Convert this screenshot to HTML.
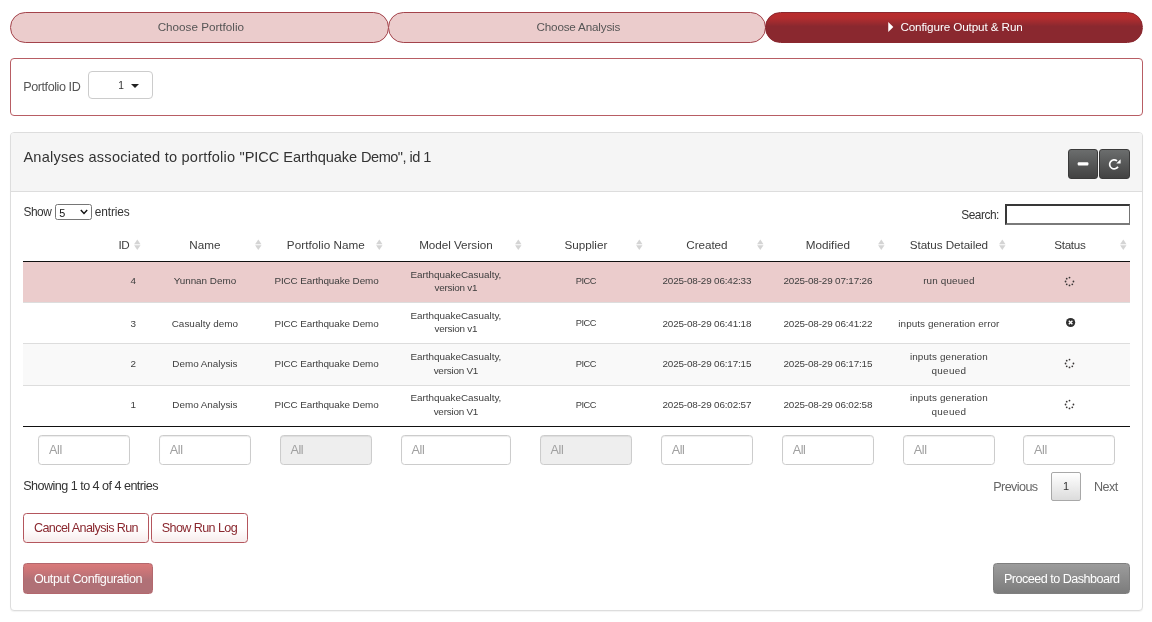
<!DOCTYPE html>
<html lang="en">
<head>
<meta charset="utf-8">
<title>Configure Output &amp; Run</title>
<style>
*{box-sizing:border-box;}
html,body{margin:0;padding:0;}
body{will-change:transform;width:1152px;height:622px;overflow:hidden;background:#fff;position:relative;
  font-family:"Liberation Sans",sans-serif;font-size:12.6px;color:#333;line-height:18px;}
.abs{position:absolute;white-space:nowrap;}
/* ---------- step pills ---------- */
.pill{position:absolute;top:12px;height:30.6px;border:1px solid #a3434b;background:#ebcccc;
  border-radius:15.3px;text-align:center;padding-left:3.2px;line-height:27.7px;color:#555;font-size:11.7px;letter-spacing:0;}
.p1{left:10px;width:378.5px;}
.p2{left:387.5px;width:378.5px;}
.p3{left:765px;width:377.5px;border-color:#8a282f;color:#fff;
  background:linear-gradient(to bottom,#ba2c2c 0%,#b22d2f 18%,#8a282f 46%,#8a282f 100%);letter-spacing:-.11px;}
.p3 svg{vertical-align:-1.1px;margin-right:6.8px;}
/* ---------- portfolio box ---------- */
.pbox{position:absolute;left:10px;top:58px;width:1132.5px;height:57.6px;border:1px solid #b85d64;border-radius:4px;background:#fff;}
.pbox .lab{position:absolute;left:12.2px;top:18.6px;color:#555;letter-spacing:-.43px;}
.psel{position:absolute;left:77px;top:12px;width:65px;height:28px;border:1px solid #ccc;border-radius:4px;background:#fff;}
.psel span{position:absolute;left:29.2px;top:5.1px;font-size:10.2px;color:#333;}
.psel i{position:absolute;left:41.5px;top:12px;width:0;height:0;border-left:4.2px solid transparent;border-right:4.2px solid transparent;border-top:4.6px solid #222;}
/* ---------- panel ---------- */
.panel{position:absolute;left:10px;top:132px;width:1132.5px;height:479px;border:1px solid #ddd;border-radius:4px;background:#fff;box-shadow:0 1px 1px rgba(0,0,0,.05);}
.in{position:absolute;left:-1px;top:-1px;width:1132.5px;height:479px;}
.ph{position:absolute;left:1px;top:1px;width:1130.5px;height:58.6px;background:#f5f5f5;border-bottom:1px solid #ddd;border-radius:3px 3px 0 0;}
.ph .title{position:absolute;left:12.4px;top:11.8px;font-size:14.6px;line-height:24px;color:#333;letter-spacing:0;white-space:pre;}
.hb{position:absolute;top:15.6px;width:30.8px;height:30.6px;border:1px solid #3a3a3a;border-radius:3px;
  background:linear-gradient(to bottom,#6b6d6d 0%,#424242 100%);}
.hb1{left:1056.8px;width:30.5px;}
.hb2{left:1087.5px;width:31.5px;}
.hb svg{position:absolute;left:0;top:0;}

/* ---------- datatable ---------- */
.dt-len{position:absolute;left:13.4px;top:71.1px;height:18px;line-height:18px;color:#333;font-size:11.9px;}
.dt-len .t{letter-spacing:-.41px;}
.lsel{position:absolute;left:44.8px;top:72.4px;width:37px;height:15.6px;border:1px solid #767676;border-radius:2.5px;background:#fff;}
.lsel span{position:absolute;left:3.4px;top:-.4px;font-size:10.8px;line-height:16px;color:#111;}
.lsel svg{position:absolute;right:3.2px;top:3.6px;}
.dt-search{position:absolute;left:951.2px;top:74.4px;line-height:18px;font-size:11.9px;letter-spacing:-.46px;}
.sinp{position:absolute;left:995px;top:72px;width:125.4px;height:21px;border:2px solid #383838;border-right:1.6px solid #747474;border-bottom-color:#7a7a7a;background:#fff;}
table.dt{position:absolute;left:13.4px;top:101.4px;width:1107px;border-collapse:separate;border-spacing:0;table-layout:fixed;}
table.dt th{height:28.8px;padding:0;font-weight:normal;font-size:11.7px;color:#3d3d3d;text-align:center;position:relative;border-bottom:1px solid #111;line-height:16px;padding-bottom:4.6px;}
table.dt th.r{text-align:right;padding-right:15.4px;}
table.dt th svg{position:absolute;right:3.8px;top:5.6px;}
table.dt td{height:41px;padding:0 9px 2px 9px;white-space:nowrap;font-size:9.9px;line-height:13.7px;text-align:center;vertical-align:middle;color:#3d3d3d;border-top:1px solid #ddd;}
table.dt td.r{text-align:right;padding-right:8.4px;}
table.dt tr.nb td.up{padding-bottom:2px;}
table.dt tr.sel td{background:#ebcccc;border-top:none;height:40.2px;}
table.dt tr.odd td{background:#f9f9f9;height:42px;}
table.dt tr.nb td{border-top-color:#ddd;padding-bottom:0;}
table.dt tr.last td{border-bottom:1px solid #111;height:41.6px;padding-bottom:2.4px;}
table.dt td svg{vertical-align:middle;}
.filt{position:absolute;top:302.9px;height:30.2px;border:1px solid #ccc;border-radius:3.6px;background:#fff;box-shadow:inset 0 1px 1px rgba(0,0,0,.075);
  font-size:12.6px;line-height:28.6px;padding-left:9.8px;color:#a0a0a0;letter-spacing:-.4px;}
.filt.dis{background:#eee;}
.dt-info{position:absolute;left:13.2px;top:344.9px;line-height:18px;letter-spacing:-.53px;}
.pg{position:absolute;top:345.5px;line-height:18px;color:#666;}
.pgbox{position:absolute;left:1041.4px;top:340.2px;width:29.2px;height:29px;border:1px solid #a8a8a8;border-radius:2px;
  background:linear-gradient(to bottom,#fff 0%,#dcdcdc 100%);text-align:center;line-height:27px;font-size:11px;color:#333;}
/* ---------- buttons ---------- */
button{font-family:inherit;margin:0;padding:0;display:block;}
.btn{position:absolute;height:30.4px;border-radius:3.6px;line-height:28.4px;text-align:center;font-size:12.6px;white-space:nowrap;}
.bo{top:380.8px;border:1px solid #b4565d;color:#8a282f;background:linear-gradient(to bottom,#fff 0%,#fff 50%,#f7ecec 100%);}
.b1{left:13.2px;width:125.6px;letter-spacing:-.6px;}
.b2{left:141px;width:96.8px;letter-spacing:-.6px;}
.b3{left:13.2px;top:431.3px;width:129.6px;color:#fff;line-height:30px;border:1px solid #b3686e;letter-spacing:-.4px;
  background:linear-gradient(to bottom,#d97a7a 0%,#c67477 30%,#b07076 55%,#b07076 100%);}
.b4{left:983.1px;top:431.3px;width:137.4px;color:#fff;line-height:30px;border:1px solid #7f7f7f;letter-spacing:-.52px;
  background:linear-gradient(to bottom,#9c9c9c 0%,#7c7c7c 100%);}
</style>
</head>
<body>

<div class="pill p1">Choose Portfolio</div>
<div class="pill p2"><span style="letter-spacing:-.18px">Choose Analysis</span></div>
<div class="pill p3"><svg width="5.6" height="10" viewBox="0 0 6 11"><path d="M0.2 0 L5.8 5.5 L0.2 11 Z" fill="#fff"/></svg>Configure Output &amp; Run</div>

<div class="pbox">
  <span class="lab abs">Portfolio ID</span>
  <div class="psel"><span>1</span><i></i></div>
</div>

<div class="panel"><div class="in">
  <div class="ph">
    <span class="title"><span style="letter-spacing:.209px">Analyses associated to portfolio </span><span style="letter-spacing:-.077px">"PICC Earthquake </span><span style="letter-spacing:-.54px">Demo", id 1</span></span>
    <button type="button" class="hb hb1"><svg width="29" height="29" viewBox="0 0 29 29"><rect x="8.7" y="12.3" width="10.7" height="3.3" rx="1" fill="#fff"/></svg></button>
    <button type="button" class="hb hb2"><svg width="29" height="29" viewBox="0 0 29 29"><path d="M17.0 10.9 A4.5 4.5 0 1 0 18.0 16.7" fill="none" stroke="#fff" stroke-width="1.7"/><path d="M20.6 9.3 L20.6 13.6 L16.3 13.6 Z" fill="#fff"/></svg></button>
  </div>

  <div class="dt-len"><span class="t">Show</span></div>
  <div class="lsel"><span>5</span><svg width="8" height="6" viewBox="0 0 8 6"><path d="M0.8 1 L4 4.4 L7.2 1" fill="none" stroke="#111" stroke-width="1.4"/></svg></div>
  <div class="dt-len" style="left:84.8px"><span class="t" style="letter-spacing:-.13px">entries</span></div>
  <div class="dt-search">Search:</div><div class="sinp"></div>
  <table class="dt"><colgroup><col style="width:121px"><col style="width:121px"><col style="width:121px"><col style="width:139px"><col style="width:121px"><col style="width:121px"><col style="width:121px"><col style="width:121px"><col style="width:121px"></colgroup>
<thead><tr><th class="r"><span style="letter-spacing:-0.644px">ID</span><svg width="6.6" height="11.4" viewBox="0 0 7 11"><path d="M3.5 0 L6.9 5 L0.1 5 Z" fill="#d4d4d4"/><path d="M3.5 11 L6.9 6 L0.1 6 Z" fill="#d4d4d4"/></svg></th><th class=""><span style="letter-spacing:0.028px">Name</span><svg width="6.6" height="11.4" viewBox="0 0 7 11"><path d="M3.5 0 L6.9 5 L0.1 5 Z" fill="#d4d4d4"/><path d="M3.5 11 L6.9 6 L0.1 6 Z" fill="#d4d4d4"/></svg></th><th class=""><span style="letter-spacing:0.056px">Portfolio Name</span><svg width="6.6" height="11.4" viewBox="0 0 7 11"><path d="M3.5 0 L6.9 5 L0.1 5 Z" fill="#d4d4d4"/><path d="M3.5 11 L6.9 6 L0.1 6 Z" fill="#d4d4d4"/></svg></th><th class=""><span style="letter-spacing:-0.051px">Model Version</span><svg width="6.6" height="11.4" viewBox="0 0 7 11"><path d="M3.5 0 L6.9 5 L0.1 5 Z" fill="#d4d4d4"/><path d="M3.5 11 L6.9 6 L0.1 6 Z" fill="#d4d4d4"/></svg></th><th class=""><span style="letter-spacing:0.001px">Supplier</span><svg width="6.6" height="11.4" viewBox="0 0 7 11"><path d="M3.5 0 L6.9 5 L0.1 5 Z" fill="#d4d4d4"/><path d="M3.5 11 L6.9 6 L0.1 6 Z" fill="#d4d4d4"/></svg></th><th class=""><span style="letter-spacing:-0.071px">Created</span><svg width="6.6" height="11.4" viewBox="0 0 7 11"><path d="M3.5 0 L6.9 5 L0.1 5 Z" fill="#d4d4d4"/><path d="M3.5 11 L6.9 6 L0.1 6 Z" fill="#d4d4d4"/></svg></th><th class=""><span style="letter-spacing:0.014px">Modified</span><svg width="6.6" height="11.4" viewBox="0 0 7 11"><path d="M3.5 0 L6.9 5 L0.1 5 Z" fill="#d4d4d4"/><path d="M3.5 11 L6.9 6 L0.1 6 Z" fill="#d4d4d4"/></svg></th><th class=""><span style="letter-spacing:-0.064px">Status Detailed</span><svg width="6.6" height="11.4" viewBox="0 0 7 11"><path d="M3.5 0 L6.9 5 L0.1 5 Z" fill="#d4d4d4"/><path d="M3.5 11 L6.9 6 L0.1 6 Z" fill="#d4d4d4"/></svg></th><th class=""><span style="letter-spacing:-0.290px">Status</span><svg width="6.6" height="11.4" viewBox="0 0 7 11"><path d="M3.5 0 L6.9 5 L0.1 5 Z" fill="#d4d4d4"/><path d="M3.5 11 L6.9 6 L0.1 6 Z" fill="#d4d4d4"/></svg></th></tr></thead>
<tbody>
<tr class="sel"><td class="r">4</td><td><span style="letter-spacing:-0.009px">Yunnan Demo</span></td><td><span style="letter-spacing:-0.087px">PICC Earthquake Demo</span></td><td><span style="letter-spacing:-0.003px">EarthquakeCasualty,</span><br><span style="letter-spacing:-0.212px">version v1</span></td><td><span style="font-size:9.3px;letter-spacing:-.46px">PICC</span></td><td><span style="letter-spacing:-0.153px">2025-08-29 06:42:33</span></td><td><span style="letter-spacing:-0.153px">2025-08-29 07:17:26</span></td><td><span style="letter-spacing:0.143px">run queued</span></td><td><svg width="11" height="11" viewBox="0 0 11 11" style="position:relative;top:-.6px"><circle cx="9.45" cy="5.50" r="0.88" fill="#3a3636"/><circle cx="8.29" cy="8.29" r="0.88" fill="#3a3636"/><circle cx="5.50" cy="9.45" r="0.88" fill="#3a3636"/><circle cx="2.71" cy="8.29" r="0.88" fill="#3a3636"/><circle cx="1.55" cy="5.50" r="0.88" fill="#3a3636"/><circle cx="2.71" cy="2.71" r="0.88" fill="#3a3636"/><circle cx="5.50" cy="1.55" r="0.88" fill="#3a3636"/></svg></td></tr>
<tr class="nb"><td class="r">3</td><td><span style="letter-spacing:0.040px">Casualty demo</span></td><td><span style="letter-spacing:-0.087px">PICC Earthquake Demo</span></td><td class="up"><span style="letter-spacing:-0.003px">EarthquakeCasualty,</span><br><span style="letter-spacing:-0.212px">version v1</span></td><td><span style="font-size:9.3px;letter-spacing:-.46px">PICC</span></td><td><span style="letter-spacing:-0.153px">2025-08-29 06:41:18</span></td><td><span style="letter-spacing:-0.153px">2025-08-29 06:41:22</span></td><td><span style="letter-spacing:0.076px">inputs generation error</span></td><td><svg width="11" height="11" viewBox="0 0 11 11" style="position:relative;top:-1.4px;left:.2px"><circle cx="5.6" cy="5.5" r="4.6" fill="#303030"/><path d="M3.8 3.7 L7.4 7.3 M7.4 3.7 L3.8 7.3" stroke="#fff" stroke-width="1.4" stroke-linecap="butt"/></svg></td></tr>
<tr class="odd"><td class="r">2</td><td><span style="letter-spacing:-0.016px">Demo Analysis</span></td><td><span style="letter-spacing:-0.087px">PICC Earthquake Demo</span></td><td><span style="letter-spacing:-0.003px">EarthquakeCasualty,</span><br><span style="letter-spacing:-0.216px">version V1</span></td><td><span style="font-size:9.3px;letter-spacing:-.46px">PICC</span></td><td><span style="letter-spacing:-0.153px">2025-08-29 06:17:15</span></td><td><span style="letter-spacing:-0.153px">2025-08-29 06:17:15</span></td><td><span style="letter-spacing:0.126px">inputs generation</span><br><span style="letter-spacing:0.291px">queued</span></td><td><svg width="11" height="11" viewBox="0 0 11 11" style="position:relative;top:-.6px"><circle cx="9.45" cy="5.50" r="0.88" fill="#3a3636"/><circle cx="8.29" cy="8.29" r="0.88" fill="#3a3636"/><circle cx="5.50" cy="9.45" r="0.88" fill="#3a3636"/><circle cx="2.71" cy="8.29" r="0.88" fill="#3a3636"/><circle cx="1.55" cy="5.50" r="0.88" fill="#3a3636"/><circle cx="2.71" cy="2.71" r="0.88" fill="#3a3636"/><circle cx="5.50" cy="1.55" r="0.88" fill="#3a3636"/></svg></td></tr>
<tr class="last"><td class="r">1</td><td><span style="letter-spacing:-0.016px">Demo Analysis</span></td><td><span style="letter-spacing:-0.087px">PICC Earthquake Demo</span></td><td><span style="letter-spacing:-0.003px">EarthquakeCasualty,</span><br><span style="letter-spacing:-0.216px">version V1</span></td><td><span style="font-size:9.3px;letter-spacing:-.46px">PICC</span></td><td><span style="letter-spacing:-0.153px">2025-08-29 06:02:57</span></td><td><span style="letter-spacing:-0.153px">2025-08-29 06:02:58</span></td><td><span style="letter-spacing:0.126px">inputs generation</span><br><span style="letter-spacing:0.291px">queued</span></td><td><svg width="11" height="11" viewBox="0 0 11 11" style="position:relative;top:-.6px"><circle cx="9.45" cy="5.50" r="0.88" fill="#3a3636"/><circle cx="8.29" cy="8.29" r="0.88" fill="#3a3636"/><circle cx="5.50" cy="9.45" r="0.88" fill="#3a3636"/><circle cx="2.71" cy="8.29" r="0.88" fill="#3a3636"/><circle cx="1.55" cy="5.50" r="0.88" fill="#3a3636"/><circle cx="2.71" cy="2.71" r="0.88" fill="#3a3636"/><circle cx="5.50" cy="1.55" r="0.88" fill="#3a3636"/></svg></td></tr>
</tbody></table>

  <div class="filt" style="left:28.2px;width:91.8px">All</div><div class="filt" style="left:149.0px;width:91.8px">All</div><div class="filt dis" style="left:269.6px;width:92.2px">All</div><div class="filt" style="left:390.8px;width:110.2px">All</div><div class="filt dis" style="left:529.7px;width:92.4px">All</div><div class="filt" style="left:650.9px;width:92px">All</div><div class="filt" style="left:771.9px;width:92px">All</div><div class="filt" style="left:893.0px;width:91.6px">All</div><div class="filt" style="left:1013.3px;width:92.2px">All</div>
  <div class="dt-info">Showing 1 to 4 of 4 entries</div>
  <div class="pg" style="left:983.3px;letter-spacing:-.6px">Previous</div>
  <div class="pgbox">1</div>
  <div class="pg" style="left:1083.9px;letter-spacing:-.48px">Next</div>
  <button type="button" class="btn bo b1">Cancel Analysis Run</button>
  <button type="button" class="btn bo b2">Show Run Log</button>
  <button type="button" class="btn b3">Output Configuration</button>
  <button type="button" class="btn b4">Proceed to Dashboard</button>
</div></div>

</body>
</html>
